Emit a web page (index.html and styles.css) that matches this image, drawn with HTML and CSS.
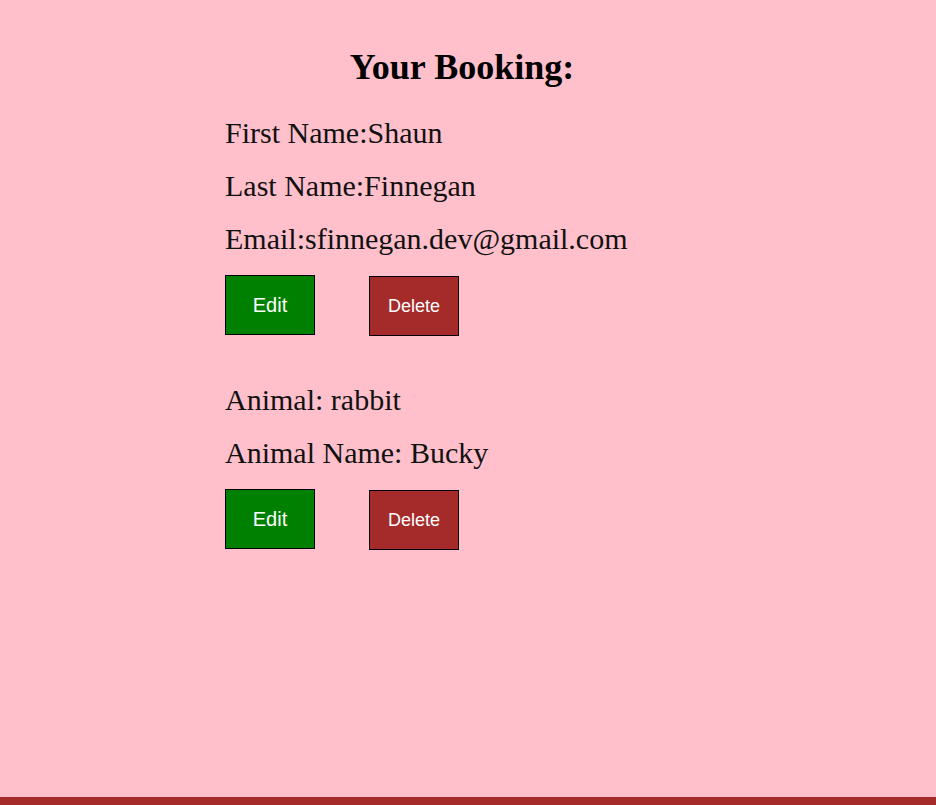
FILE: index.html
```html
<!DOCTYPE html>
<html>
<head>
<meta charset="utf-8">
<link rel="stylesheet" href="styles.css">
</head>
<body>
<main class="page">
  <h1 class="title">Your Booking:</h1>
  <section class="block">
    <p class="line">First Name:Shaun</p>
    <p class="line">Last Name:Finnegan</p>
    <p class="line">Email:sfinnegan.dev@gmail.com</p>
    <div class="actions">
      <button class="btn btn-edit">Edit</button>
      <button class="btn btn-delete">Delete</button>
    </div>
  </section>
  <section class="block block-animal">
    <p class="line">Animal: rabbit</p>
    <p class="line">Animal Name: Bucky</p>
    <div class="actions">
      <button class="btn btn-edit">Edit</button>
      <button class="btn btn-delete">Delete</button>
    </div>
  </section>
</main>
<footer class="footer"></footer>
</body>
</html>
```
FILE: styles.css
```css
html, body {
  margin: 0;
  padding: 0;
  height: 100%;
}
body {
  background: #ffc0cb;
  font-family: "Liberation Serif", "Times New Roman", serif;
  color: #111;
  display: flex;
  flex-direction: column;
  min-height: 805px;
}
.page {
  flex: 1;
  padding-left: 225px;
  padding-top: 46px;
}
.title {
  font-size: 36px;
  line-height: 42px;
  font-weight: bold;
  margin: 0;
  width: 474px;
  text-align: center;
  color: #000;
}
.block {
  margin-top: 28px;
}
.block-animal {
  margin-top: 47px;
}
.line {
  font-size: 30px;
  line-height: 34px;
  margin: 0 0 19px 0;
}
.actions {
  display: flex;
  align-items: flex-start;
  gap: 54px;
  margin-top: 1px;
}
.block-animal .actions {
  margin-top: 0;
}
.btn {
  width: 90px;
  height: 60px;
  border: 1px solid #000;
  color: #fff;
  font-family: "Liberation Sans", Arial, sans-serif;
  padding: 0;
  margin: 0;
}
.btn-edit {
  background: #008000;
  font-size: 20px;
}
.btn-delete {
  background: #a52a2a;
  font-size: 18px;
  margin-top: 1px;
}
.footer {
  height: 8px;
  background: #a52a2a;
}
```
